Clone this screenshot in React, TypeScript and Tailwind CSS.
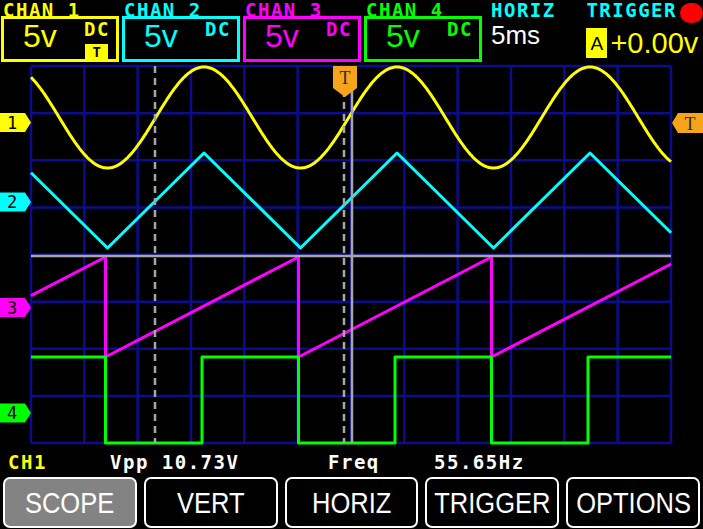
import React from 'react'

const X0 = 31
const X1 = 671
const Y0 = 66
const Y1 = 443
const PER = 193

const mono = "font-['DejaVu_Sans_Mono','Liberation_Mono',monospace] font-bold"
const sans = "font-['Liberation_Sans',Arial,sans-serif]"

function frac(v: number) {
  return v - Math.floor(v)
}

function sinePath() {
  let d = ''
  for (let x = X0; x <= X1; x += 1) {
    const y = 117.5 - 50.5 * Math.cos((2 * Math.PI * (x - 204)) / PER)
    d += (x === X0 ? 'M' : 'L') + x + ' ' + y.toFixed(1) + ' '
  }
  return d
}

function triY(x: number) {
  const p = frac((x - 107.5) / PER)
  return p < 0.5 ? 248 - 95 * (p / 0.5) : 153 + 95 * ((p - 0.5) / 0.5)
}

function trianglePath() {
  const pts: number[] = [X0]
  for (let x = 107.5 - PER; x < X1; x += PER / 2) if (x > X0) pts.push(x)
  pts.push(X1)
  return pts.map((x, i) => (i ? 'L' : 'M') + x.toFixed(1) + ' ' + triY(x).toFixed(1)).join(' ')
}

function sawY(x: number) {
  return 357 - 100 * frac((x - 105.5) / PER)
}

function sawPath() {
  let d = `M${X0} ${sawY(X0).toFixed(1)}`
  for (const xd of [105.5, 298.5, 491.5]) d += ` L${xd} 257 L${xd} 357`
  d += ` L${X1} ${sawY(X1).toFixed(1)}`
  return d
}

function squarePath() {
  const hi = 357
  const lo = 443
  let d = `M${X0} ${hi}`
  for (const xd of [105.5, 298.5, 491.5]) {
    const xr = xd + PER / 2
    d += ` L${xd} ${hi} L${xd} ${lo} L${xr} ${lo}`
    if (xr < X1) d += ` L${xr} ${hi}`
  }
  d += ` L${X1} ${hi}`
  return d
}

const channels = [
  { name: 'CHAN 1', color: 'text-[#ffff00]', border: 'border-[#ffff00]', trig: true },
  { name: 'CHAN 2', color: 'text-[#00ffff]', border: 'border-[#00ffff]', trig: false },
  { name: 'CHAN 3', color: 'text-[#ff00ff]', border: 'border-[#ff00ff]', trig: false },
  { name: 'CHAN 4', color: 'text-[#00ff00]', border: 'border-[#00ff00]', trig: false },
]

const markers = [
  { label: '1', y: 122.5, fill: '#ffff00' },
  { label: '2', y: 202, fill: '#00ffff' },
  { label: '3', y: 307.5, fill: '#ff00ff' },
  { label: '4', y: 413, fill: '#00ff00' },
]

function Plot() {
  const vx = Array.from({ length: 13 }, (_, i) => X0 + (i * (X1 - X0)) / 12)
  const hy = Array.from({ length: 9 }, (_, j) => Y0 + (j * (Y1 - Y0)) / 8)
  return (
    <svg width={703} height={385} viewBox="0 63 703 385" className="block">
      <g stroke="#0c0c8c" strokeWidth={2.5}>
        {vx.map((x) => (
          <line key={'v' + x} x1={x} y1={Y0} x2={x} y2={Y1} />
        ))}
        {hy.map((y) => (
          <line key={'h' + y} x1={X0} y1={y} x2={X1} y2={y} />
        ))}
      </g>
      <g fill="none" strokeWidth={3} strokeLinejoin="round">
        <path d={sinePath()} stroke="#ffff00" />
        <path d={trianglePath()} stroke="#00ffff" />
        <path d={sawPath()} stroke="#ff00ff" />
        <path d={squarePath()} stroke="#00ff00" />
      </g>
      <g stroke="#a6a6a6" strokeWidth={2.5}>
        <line x1={X0} y1={256} x2={X1} y2={256} />
        <line x1={352} y1={Y0} x2={352} y2={Y1} />
        <line x1={155} y1={Y0} x2={155} y2={Y1} strokeDasharray="7 5" />
        <line x1={344} y1={Y0} x2={344} y2={Y1} strokeDasharray="7 5" />
      </g>
      {markers.map((m) => (
        <g key={m.label}>
          <polygon
            points={`0,${m.y - 9.5} 25,${m.y - 9.5} 31,${m.y} 25,${m.y + 9.5} 0,${m.y + 9.5}`}
            fill={m.fill}
          />
          <text
            x={12}
            y={m.y + 6}
            textAnchor="middle"
            fontSize={17}
            fontFamily="DejaVu Sans Mono, monospace"
            fill="#000"
          >
            {m.label}
          </text>
        </g>
      ))}
      <polygon points="333,66 357,66 357,88 345,97 333,88" fill="#f6a41c" />
      <text x={345} y={84} textAnchor="middle" fontSize={18} fontFamily="Liberation Serif, serif" fill="#2a2a2a">
        T
      </text>
      <polygon points="703,113 678,113 672,123 678,133 703,133" fill="#f6a41c" />
      <text x={690} y={129.5} textAnchor="middle" fontSize={18} fontFamily="Liberation Serif, serif" fill="#2a2a2a">
        T
      </text>
    </svg>
  )
}

function Header() {
  return (
    <div className="flex h-[63px] pl-[1px]">
      <div className="flex gap-[3px]">
        {channels.map((c) => (
          <div key={c.name} className="flex w-[118px] flex-col">
            <div className={`${mono} ${c.color} h-[16px] pl-[2px] pt-[1px] text-[19px] leading-none tracking-[1.5px]`}>
              {c.name}
            </div>
            <div className={`${c.border} flex h-[46px] border-[3px] pl-[19px] pr-[6px]`}>
              <span className={`${sans} ${c.color} mt-[1px] text-[32px] leading-none`}>5v</span>
              <div className="ml-auto flex flex-col items-start">
                <span className={`${mono} ${c.color} mt-[1px] text-[19px] leading-none tracking-[1.5px]`}>DC</span>
                {c.trig && (
                  <span className={`${mono} mt-[5px] ml-[1px] flex h-[15px] w-[23px] items-center justify-center bg-[#ffff00] text-[14px] leading-none text-black`}>
                    T
                  </span>
                )}
              </div>
            </div>
          </div>
        ))}
      </div>
      <div className="ml-[9px] flex w-[98px] flex-col">
        <div className={`${mono} h-[16px] pt-[1px] text-[19px] leading-none tracking-[1.5px] text-[#00ffff]`}>HORIZ</div>
        <div className={`${sans} mt-[6px] text-[26px] leading-none text-white`}>5ms</div>
      </div>
      <div className="flex flex-1 flex-col">
        <div className="flex items-start">
          <span className={`${mono} pt-[1px] text-[19px] leading-none tracking-[1.5px] text-[#00ffff]`}>TRIGGER</span>
          <span className="mt-[3px] ml-[3px] h-[20px] w-[23px] rounded-full bg-[#ff0000]" />
        </div>
        <div className="mt-[5px] flex items-center">
          <span className={`${sans} flex h-[30px] w-[21px] items-center justify-center bg-[#ffff00] text-[19px] leading-none text-black`}>
            A
          </span>
          <span className={`${sans} ml-[3px] text-[29px] leading-none text-[#ffff00]`}>+0.00v</span>
        </div>
      </div>
    </div>
  )
}

function Status() {
  return (
    <div className={`${mono} flex h-[28px] items-center whitespace-pre pl-[8px] text-[19px] leading-none tracking-[1.5px] text-white`}>
      <span className="w-[102px] text-[#ffff00]">CH1</span>
      <span className="w-[218px]">Vpp 10.73V</span>
      <span className="w-[106px]">Freq</span>
      <span>55.65Hz</span>
    </div>
  )
}

const buttons = ['SCOPE', 'VERT', 'HORIZ', 'TRIGGER', 'OPTIONS']

function Buttons() {
  return (
    <div className="flex gap-[7px] px-[3px] pt-[1px]">
      {buttons.map((b, i) => (
        <div
          key={b}
          className={`flex h-[51px] flex-1 items-center justify-center overflow-hidden rounded-[7px] border-2 border-white ${
            i === 0 ? 'bg-[#838383]' : 'bg-black'
          }`}
        >
          <span className={`${sans} inline-block scale-x-[0.85] text-[30px] leading-none text-white`}>{b}</span>
        </div>
      ))}
    </div>
  )
}

export default function App() {
  return (
    <div className="h-[529px] w-[703px] overflow-hidden bg-black">
      <Header />
      <Plot />
      <Status />
      <Buttons />
    </div>
  )
}
